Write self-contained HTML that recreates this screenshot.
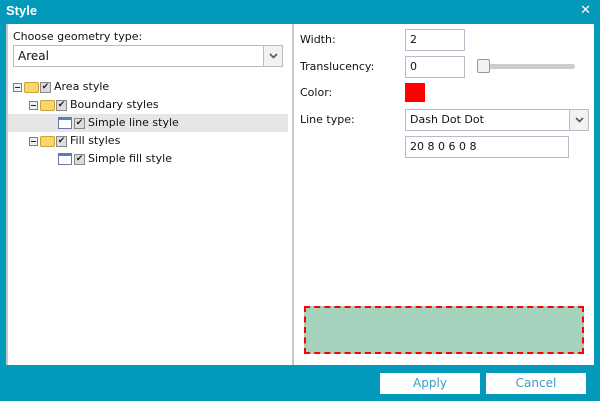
<!DOCTYPE html>
<html><head><style>
*{margin:0;padding:0;box-sizing:border-box}
body{width:600px;height:401px;background:#0399bb;position:relative;overflow:hidden;font-family:"DejaVu Sans","Liberation Sans",sans-serif;font-size:11px;color:#111}
.abs{position:absolute}
.title{left:6px;top:3px;color:#fff;font-weight:bold;font-size:13px;font-family:"Liberation Sans",sans-serif}
.x{right:9px;top:3px;color:#fff;font-size:13px;font-weight:bold}
.left{left:6px;top:24px;width:288px;height:341px;background:#fff;border-left:2px solid #c8c8c8;border-right:2px solid #c8c8c8}
.right{left:294px;top:24px;width:300px;height:341px;background:#fff}
.input{border:1px solid #b8bcc8;background:#fff;padding:0 4px;line-height:20px;height:22px}
.dd{position:absolute;right:0;top:0;width:19px;height:100%;border-left:1px solid #b8bcc8;background:#f2f2f2}
.dd svg{position:absolute;left:5px;top:7px}
.row{position:absolute;height:18px;line-height:18px;display:flex;align-items:center}
.minus{width:9px;height:9px;border:1px solid #6f7f99;background:#eef2f8;position:relative;margin-right:2px}
.minus:after{content:"";position:absolute;left:1px;top:3px;width:5px;height:1px;background:#222}
.folder{width:15px;height:11px;background:#f8d66a;border:1px solid #c9a432;border-radius:2px;margin-right:1px}
.cb{width:11px;height:11px;border:1px solid #888;background:#ddd;font-size:9px;line-height:9px;text-align:center;margin-right:3px;color:#222}
.li{width:14px;height:12px;border:1px solid #6a7aa0;background:#fff;margin-right:2px;position:relative;border-top:3px solid #5a7bc8}
.btn{background:#fff;color:#3a9cc4;text-align:center;line-height:21px;height:21px;width:100px;font-size:12px}
</style></head><body>
<div class="abs title">Style</div>
<div class="abs x">✕</div>
<div class="abs left">
 <div class="abs" style="left:5px;top:6px">Choose geometry type:</div>
 <div class="abs input" style="left:5px;top:21px;width:270px;font-size:12px">Areal<div class="dd"><svg width="9" height="6"><path d="M1 1L4.5 4.5L8 1" stroke="#555" stroke-width="1.6" fill="none"/></svg></div></div>
 <div class="row" style="left:5px;top:54px"><div class="minus"></div><div class="folder"></div><div class="cb">✔</div>Area style</div>
 <div class="row" style="left:21px;top:72px"><div class="minus"></div><div class="folder"></div><div class="cb">✔</div>Boundary styles</div>
 <div class="abs" style="left:0;top:90px;width:280px;height:18px;background:#e6e6e6"></div>
 <div class="row" style="left:50px;top:90px"><div class="li"></div><div class="cb">✔</div>Simple line style</div>
 <div class="row" style="left:21px;top:108px"><div class="minus"></div><div class="folder"></div><div class="cb">✔</div>Fill styles</div>
 <div class="row" style="left:50px;top:126px"><div class="li"></div><div class="cb">✔</div>Simple fill style</div>
</div>
<div class="abs right">
 <div class="abs" style="left:6px;top:9px">Width:</div>
 <div class="abs input" style="left:111px;top:5px;width:60px">2</div>
 <div class="abs" style="left:6px;top:36px">Translucency:</div>
 <div class="abs input" style="left:111px;top:32px;width:60px">0</div>
 <div class="abs" style="left:186px;top:40px;width:95px;height:5px;background:#ccc;border-radius:3px"></div>
 <div class="abs" style="left:183px;top:35px;width:13px;height:14px;background:#f2f2f2;border:1px solid #999;border-radius:2px"></div>
 <div class="abs" style="left:6px;top:62px">Color:</div>
 <div class="abs" style="left:111px;top:59px;width:20px;height:19px;background:#f00"></div>
 <div class="abs" style="left:6px;top:89px">Line type:</div>
 <div class="abs input" style="left:111px;top:85px;width:184px">Dash Dot Dot<div class="dd"><svg width="9" height="6"><path d="M1 1L4.5 4.5L8 1" stroke="#555" stroke-width="1.6" fill="none"/></svg></div></div>
 <div class="abs input" style="left:111px;top:112px;width:164px">20 8 0 6 0 8</div>
 <div class="abs" style="left:10px;top:282px;width:280px;height:48px;background:#a5d2bd;border:2px dashed #f00"></div>
</div>
<div class="abs btn" style="left:380px;top:373px">Apply</div>
<div class="abs btn" style="left:486px;top:373px">Cancel</div>
</body></html>
